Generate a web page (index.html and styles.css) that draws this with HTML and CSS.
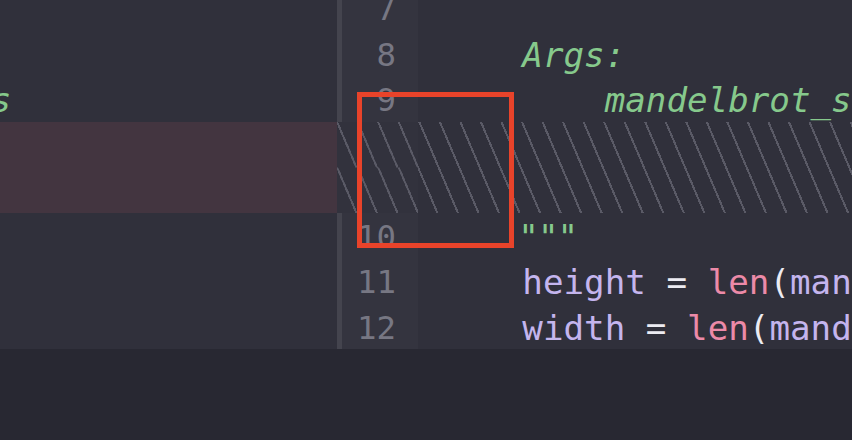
FILE: index.html
```html
<!DOCTYPE html>
<html>
<head>
<meta charset="utf-8">
<link rel="stylesheet" href="styles.css">
</head>
<body>
<div class="screen">
  <div class="editor">
    <div class="row">
      <div class="left"></div><div class="sep"></div><div class="gutter">7</div><div class="code"></div>
    </div>
    <div class="row">
      <div class="left"></div><div class="sep"></div><div class="gutter">8</div><div class="code"><span class="doc">    Args:</span></div>
    </div>
    <div class="row">
      <div class="left"><span class="doc cut">rows</span></div><div class="sep"></div><div class="gutter">9</div><div class="code"><span class="doc">        mandelbrot_set (list): the set</span></div>
    </div>
    <div class="row tall">
      <div class="left del"></div><div class="hatch-gutter"></div><div class="hatch-code"></div>
    </div>
    <div class="row">
      <div class="left"></div><div class="sep"></div><div class="gutter">10</div><div class="code"><span class="doc quotes">    """</span></div>
    </div>
    <div class="row">
      <div class="left"></div><div class="sep"></div><div class="gutter">11</div><div class="code">    <span class="var">height</span> <span class="op">=</span> <span class="fn">len</span><span class="op">(</span><span class="var">mandelbrot_set</span><span class="op">)</span></div>
    </div>
    <div class="row">
      <div class="left"></div><div class="sep"></div><div class="gutter">12</div><div class="code">    <span class="var">width</span> <span class="op">=</span> <span class="fn">len</span><span class="op">(</span><span class="var">mandelbrot_set</span><span class="op">[</span><span class="num">0</span><span class="op">])</span></div>
    </div>
  </div>
  <div class="footer"></div>
  <div class="highlight"></div>
</div>
</body>
</html>
```
FILE: styles.css
```css
html, body {
  margin: 0;
  padding: 0;
  background: #282832;
}
.screen {
  position: relative;
  width: 852px;
  height: 440px;
  overflow: hidden;
  display: flex;
  flex-direction: column;
  font-family: "DejaVu Sans Mono", "Liberation Mono", monospace;
}
.editor {
  margin-top: -15px;
  display: flex;
  flex-direction: column;
  flex: none;
}
.row {
  display: flex;
  height: 45.5px;
  line-height: 45.5px;
}
.row.tall {
  height: 91px;
}
.left {
  width: 337px;
  flex: none;
  box-sizing: border-box;
  padding-top: 2px;
  background: #30303b;
  overflow: hidden;
  white-space: pre;
  font-size: 34.2px;
}
.left.del {
  background: #433540;
}
.cut {
  margin-left: -71px;
}
.sep {
  width: 5px;
  flex: none;
  background: #44444e;
}
.gutter {
  width: 76px;
  flex: none;
  box-sizing: border-box;
  padding-top: 2px;
  padding-right: 22px;
  text-align: right;
  background: #34343f;
  color: #777783;
  font-size: 32.4px;
  overflow: hidden;
}
.code {
  flex: 1;
  background: #30303b;
  box-sizing: border-box;
  padding-top: 2px;
  padding-left: 22px;
  white-space: pre;
  overflow: hidden;
  font-size: 34.2px;
  color: #e6e6ee;
}
.hatch-gutter {
  width: 81px;
  flex: none;
  background-color: #32323d;
  background-image: repeating-linear-gradient(67deg, transparent 0 16.9px, #5a5a66 16.9px 18.9px);
  background-size: 100% 45.5px;
}
.hatch-code {
  flex: 1;
  background-color: #30303b;
  background-image: repeating-linear-gradient(67deg, transparent 0 16.9px, #5a5a66 16.9px 18.9px);
}
.doc {
  color: #86c98c;
  font-style: italic;
}
.quotes {
  letter-spacing: -1px;
}
.var {
  color: #c4b5ee;
}
.fn {
  color: #ec8aa8;
}
.op {
  color: #ecebf2;
}
.num {
  color: #f0b27a;
}
.footer {
  flex: 1;
  background: #282832;
}
.highlight {
  position: absolute;
  left: 357px;
  top: 92px;
  width: 157px;
  height: 156px;
  box-sizing: border-box;
  border: 5px solid #e8432a;
}
```
